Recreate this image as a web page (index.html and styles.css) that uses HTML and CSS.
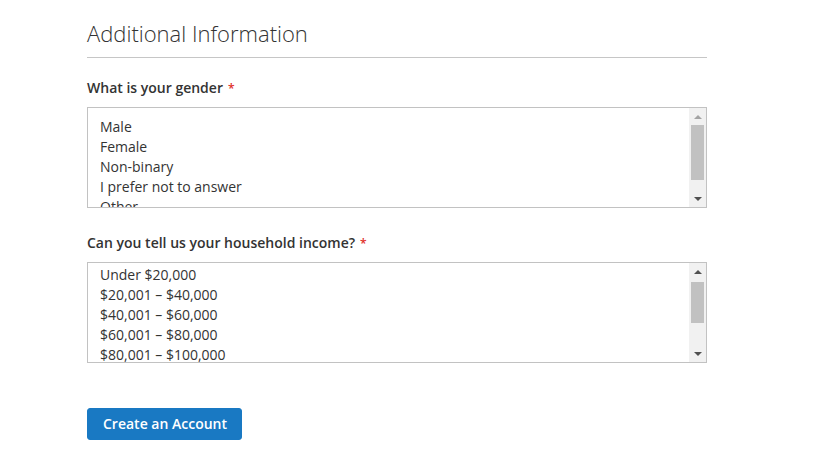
FILE: index.html
```html
<!DOCTYPE html>
<html lang="en">
<head>
<meta charset="utf-8">
<title>Additional Information</title>
<link rel="stylesheet" href="styles.css">
</head>
<body>
<form class="form">
  <fieldset class="fieldset">
    <legend class="legend">Additional Information</legend>

    <div class="field">
      <label class="label"><span>What is your gender</span><span class="req">*</span></label>
      <div class="listbox">
        <div class="options options-top">
          <div class="option">Male</div>
          <div class="option">Female</div>
          <div class="option">Non-binary</div>
          <div class="option">I prefer not to answer</div>
          <div class="option">Other</div>
        </div>
        <div class="scrollbar">
          <div class="sb-btn"><span class="arrow-up arrow-disabled"></span></div>
          <div class="sb-track"><div class="sb-thumb" style="margin-top:0;height:55px"></div></div>
          <div class="sb-btn"><span class="arrow-down"></span></div>
        </div>
      </div>
    </div>

    <div class="field">
      <label class="label"><span>Can you tell us your household income?</span><span class="req">*</span></label>
      <div class="listbox">
        <div class="options options-scrolled">
          <div class="option">Under $20,000</div>
          <div class="option">$20,001 – $40,000</div>
          <div class="option">$40,001 – $60,000</div>
          <div class="option">$60,001 – $80,000</div>
          <div class="option">$80,001 – $100,000</div>
          <div class="option">Over $100,000</div>
        </div>
        <div class="scrollbar">
          <div class="sb-btn"><span class="arrow-up"></span></div>
          <div class="sb-track"><div class="sb-thumb" style="margin-top:2px;height:41px"></div></div>
          <div class="sb-btn"><span class="arrow-down"></span></div>
        </div>
      </div>
    </div>
  </fieldset>

  <div class="actions">
    <button type="button" class="primary">Create an Account</button>
  </div>
</form>
</body>
</html>
```

FILE: styles.css
```css
html, body {
  margin: 0;
  padding: 0;
  background: #ffffff;
}
body {
  font-family: "Open Sans", "Liberation Sans", sans-serif;
  color: #333333;
  font-size: 14px;
}
.form {
  width: 620px;
  margin-left: 87px;
  padding-top: 20px;
}
.fieldset {
  border: 0;
  margin: 0;
  padding: 0;
  min-width: 0;
}
.legend {
  display: block;
  width: 100%;
  padding: 0 0 11px 0;
  margin: 0;
  font-size: 22px;
  font-weight: 300;
  line-height: 26px;
  border-bottom: 1px solid #c6c6c6;
}
.field {
  margin-top: 20px;
}
.field + .field {
  margin-top: 25px;
}
.label {
  display: block;
  font-weight: 600;
  font-size: 14px;
  line-height: 20px;
  margin-bottom: 8px;
}
.req {
  color: #e02b27;
  font-size: 12px;
  margin-left: 5px;
}
.listbox {
  display: flex;
  height: 101px;
  box-sizing: border-box;
  border: 1px solid #c2c2c2;
  background: #ffffff;
}
.options {
  flex: 1;
  overflow: hidden;
  padding: 0 12px;
  font-size: 14px;
  line-height: 20px;
}
.options-top {
  padding-top: 9px;
}
.options-scrolled {
  padding-top: 2px;
}
.option {
  white-space: nowrap;
}
.scrollbar {
  width: 17px;
  flex: none;
  display: flex;
  flex-direction: column;
  background: #f1f1f1;
}
.sb-btn {
  height: 17px;
  flex: none;
  display: flex;
  align-items: center;
  justify-content: center;
}
.sb-track {
  flex: 1;
  padding: 0 2px;
}
.sb-thumb {
  background: #c1c1c1;
}
.arrow-up,
.arrow-down {
  width: 0;
  height: 0;
  border-left: 4px solid transparent;
  border-right: 4px solid transparent;
}
.arrow-up {
  border-bottom: 4px solid #505050;
}
.arrow-down {
  border-top: 4px solid #505050;
}
.arrow-up.arrow-disabled {
  border-bottom-color: #a3a3a3;
}
.actions {
  margin-top: 45px;
}
.primary {
  font-family: "Open Sans", "Liberation Sans", sans-serif;
  background: #1979c3;
  border: 1px solid #1979c3;
  color: #ffffff;
  font-size: 14px;
  font-weight: 600;
  line-height: 20px;
  height: 32px;
  padding: 0 14px 0 15px;
  border-radius: 3px;
  cursor: pointer;
}
```
